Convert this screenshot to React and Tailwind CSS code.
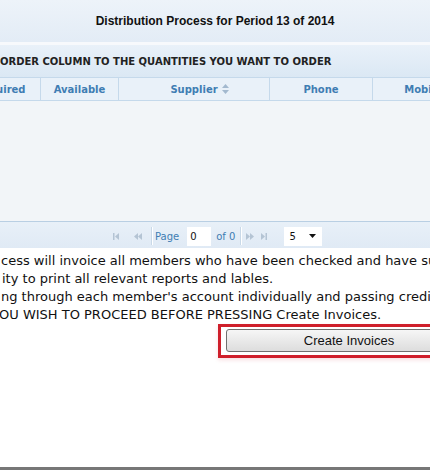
import React from 'react'

const SortIcon = () => (
  <svg width="7" height="10" viewBox="0 0 7 10" className="ml-[4px]">
    <path d="M3.5 0 L7 4 H0 Z" fill="#a3b9cf" />
    <path d="M0 6 H7 L3.5 10 Z" fill="#a3b9cf" />
  </svg>
)

const PagerIcon = ({ type }) => {
  const c = '#b4c4d4'
  const shapes = {
    first: (
      <>
        <rect x="0" y="0" width="1.5" height="7" fill={c} />
        <path d="M6 0 V7 L2 3.5 Z" fill={c} />
      </>
    ),
    prev: (
      <>
        <path d="M4 0 V7 L0 3.5 Z" fill={c} />
        <path d="M8 0 V7 L4 3.5 Z" fill={c} />
      </>
    ),
    next: (
      <>
        <path d="M0 0 V7 L4 3.5 Z" fill={c} />
        <path d="M4 0 V7 L8 3.5 Z" fill={c} />
      </>
    ),
    last: (
      <>
        <path d="M0 0 V7 L4 3.5 Z" fill={c} />
        <rect x="4.5" y="0" width="1.5" height="7" fill={c} />
      </>
    ),
  }
  return (
    <svg width="8" height="7" viewBox="0 0 8 7">
      {shapes[type]}
    </svg>
  )
}

const Sep = () => <div className="w-px h-[18px] bg-[#c9d9e8] border-r border-white box-content" />

export default function App() {
  return (
    <div className="w-[430px] h-[470px] overflow-hidden bg-white flex flex-col font-['DejaVu_Sans',sans-serif]">
      {/* Title */}
      <div className="h-[42px] shrink-0 bg-gradient-to-b from-[#edf3f9] to-[#e3ecf6] flex items-center justify-center">
        <h1 className="font-['Liberation_Sans',Arial,sans-serif] font-bold text-[12px] text-[#111]">
          Distribution Process for Period 13 of 2014
        </h1>
      </div>
      <div className="h-[3px] shrink-0 bg-[#f7f9fc]" />

      {/* Grid */}
      <div className="-ml-[40px] w-[600px] shrink-0">
        <div className="h-[32px] flex items-center pl-[40px] bg-gradient-to-b from-[#e9f1f9] to-[#dbe8f4] text-[10px] font-bold text-[#222] whitespace-nowrap">
          ORDER COLUMN TO THE QUANTITIES YOU WANT TO ORDER
        </div>
        <div className="flex h-[24px] border-y border-[#c5d9eb] bg-[#e9f1f9] text-[10px] font-bold text-[#3f7db3]">
          <div className="w-[81px] border-r border-[#c5d9eb] flex items-center justify-center">Required</div>
          <div className="w-[78px] border-r border-[#c5d9eb] flex items-center justify-center">Available</div>
          <div className="w-[151px] border-r border-[#c5d9eb] flex items-center justify-center pl-[11px]">
            Supplier
            <SortIcon />
          </div>
          <div className="w-[103px] border-r border-[#c5d9eb] flex items-center justify-center">Phone</div>
          <div className="w-[100px] flex items-center justify-center">Mobile</div>
        </div>
        <div className="h-[120px] bg-[#f2f5f8]" />
        <div className="h-[27px] border-t border-[#b9cfe3] bg-gradient-to-b from-[#e8f0f8] to-[#e0eaf5] flex items-center pl-[153px] pt-[2px] text-[10px] text-[#3f7db3]">
          <PagerIcon type="first" />
          <div className="w-[13px]" />
          <PagerIcon type="prev" />
          <div className="ml-[9px]"><Sep /></div>
          <span className="ml-[2px]">Page</span>
          <div className="ml-[8px] w-[24px] h-[19px] bg-white flex items-center pl-[3px] text-[#111]">0</div>
          <span className="ml-[5px]">of 0</span>
          <div className="ml-[5px]"><Sep /></div>
          <div className="ml-[4px]"><PagerIcon type="next" /></div>
          <div className="ml-[7px]"><PagerIcon type="last" /></div>
          <div className="ml-[15px] w-[38px] h-[19px] bg-white flex items-center justify-between pl-[5px] pr-[6px] text-[#111]">
            <span>5</span>
            <svg width="7" height="4" viewBox="0 0 7 4">
              <path d="M0 0 H7 L3.5 4 Z" fill="#111" />
            </svg>
          </div>
        </div>
      </div>

      {/* Notes */}
      <div className="pt-[4px] text-[13px] leading-[18px] text-[#111] whitespace-nowrap">
        <p className="pl-[1px]">cess will invoice all members who have been checked and have submitted orders</p>
        <p className="pl-[2px]">ity to print all relevant reports and lables.</p>
        <p className="pl-[1px]">ng through each member's account individually and passing credits</p>
        <p className="-ml-[1px]">OU WISH TO PROCEED BEFORE PRESSING Create Invoices.</p>
      </div>

      <div className="pl-[218px] shrink-0">
        <div className="w-[300px] border-[3px] border-[#cf1f2b] pl-[5px] pt-[1px] pb-[3px] shadow-[0_2px_4px_rgba(210,40,60,0.15)]">
          <button className="w-[246px] h-[23px] border border-[#707070] rounded-[3px] bg-gradient-to-b from-[#f6f6f6] to-[#dddddd] font-['Liberation_Sans',Arial,sans-serif] text-[13px] text-[#111]">
            Create Invoices
          </button>
        </div>
      </div>

      <div className="flex-1" />
      <div className="h-[3px] shrink-0 bg-[#777]" />
    </div>
  )
}
